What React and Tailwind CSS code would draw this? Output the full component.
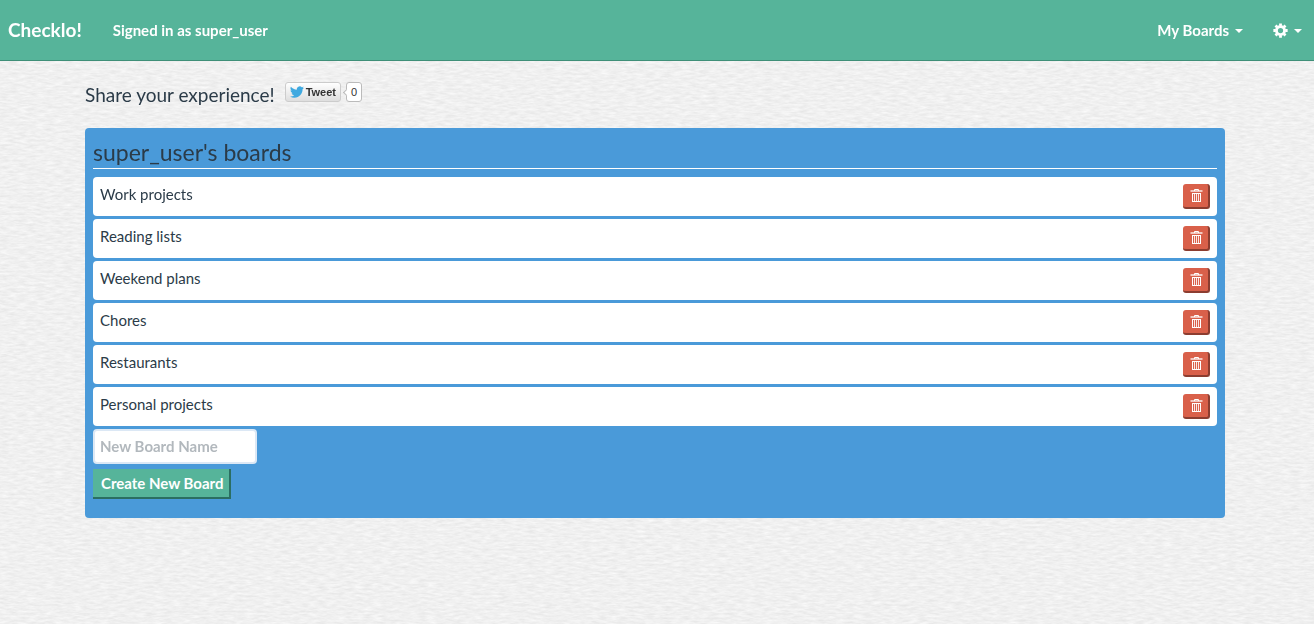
import React from "react";

const boards = [
  "Work projects",
  "Reading lists",
  "Weekend plans",
  "Chores",
  "Restaurants",
  "Personal projects",
];

function PaperTexture() {
  return (
    <svg className="fixed inset-0 -z-10 h-full w-full" aria-hidden="true">
      <filter id="paper" x="0" y="0" width="100%" height="100%" colorInterpolationFilters="sRGB">
        <feTurbulence type="fractalNoise" baseFrequency="0.11 0.45" numOctaves="3" seed="7" />
        <feColorMatrix values="0.1 0 0 0 0.891  0.1 0 0 0 0.891  0.1 0 0 0 0.891  0 0 0 0 1" />
      </filter>
      <rect width="100%" height="100%" fill="#f0f0f0" filter="url(#paper)" />
    </svg>
  );
}

function Caret() {
  return (
    <svg className="mt-0.5" width="8" height="4" viewBox="0 0 8 4" fill="currentColor" aria-hidden="true">
      <path d="M0 0h8L4 4z" />
    </svg>
  );
}

function Cog() {
  return (
    <svg width="15" height="15" viewBox="0 0 16 16" aria-hidden="true">
      <circle cx="8" cy="8" r="4.3" fill="none" stroke="currentColor" strokeWidth="3" />
      <path
        d="M8 .4V3M8 13v2.600M.4 8H3M13 8h2.600M2.700 2.700l1.800 1.800M11.500 11.500l1.800 1.800M2.700 13.300l1.800-1.800M11.500 4.500l1.800-1.800"
        stroke="currentColor"
        strokeWidth="3"
      />
    </svg>
  );
}

function Trash() {
  return (
    <svg width="13" height="15" viewBox="0 0 13 15" fill="none" stroke="currentColor" aria-hidden="true">
      <path d="M.5 3h12" strokeWidth="1.300" />
      <path d="M4.500 3V1.500h4V3" strokeWidth="1" />
      <path d="M2 5.500h9M2.500 5v9M10.500 5v9M2 13.500h9" strokeWidth="1" />
      <path d="M4.500 5v9M6.500 5v9M8.500 5v9" strokeWidth="1" strokeOpacity=".85" />
    </svg>
  );
}

function Bird() {
  return (
    <svg width="14" height="12" viewBox="0 2 24 20" fill="#3fa9e0" aria-hidden="true">
      <path d="M23.950 4.570a10 10 0 0 1-2.820.770 4.960 4.960 0 0 0 2.160-2.720c-.950.550-2 .950-3.130 1.180a4.920 4.920 0 0 0-8.380 4.480C7.690 8.100 4.070 6.130 1.640 3.160a4.920 4.920 0 0 0 1.520 6.570 4.900 4.900 0 0 1-2.230-.610v.060c0 2.390 1.700 4.380 3.950 4.830a5 5 0 0 1-2.210.080 4.940 4.940 0 0 0 4.600 3.420A9.870 9.870 0 0 1 0 19.540a14 14 0 0 0 7.550 2.210c9.050 0 14-7.500 14-13.980 0-.210 0-.420-.020-.630a9.940 9.940 0 0 0 2.460-2.550z" />
    </svg>
  );
}

export default function App() {
  return (
    <div className="font-['Lato',sans-serif] text-[15px] leading-5 text-[#2b3b48]">
      <PaperTexture />
      <header className="flex h-[61px] items-center justify-between border-b border-[#3f8f78] bg-[#56b49a] pr-3 pl-2 font-bold text-white">
        <div className="flex items-center gap-[31px]">
          <a href="#home" className="text-[19px]">Checklo!</a>
          <p>Signed in as super_user</p>
        </div>
        <nav className="flex items-center gap-[30px]">
          <button type="button" className="flex items-center gap-1.5">
            My Boards <Caret />
          </button>
          <button type="button" aria-label="Settings" className="flex items-center gap-1.5">
            <Cog /> <Caret />
          </button>
        </nav>
      </header>

      <main className="mx-auto max-w-[1144px] pr-1">
        <div className="flex h-[67px] items-center gap-2.5">
          <h1 className="text-[19px]">Share your experience!</h1>
          <div className="flex items-center gap-[5px] pb-1.5 font-['Liberation_Sans',sans-serif] text-[11px]">
            <a
              href="#tweet"
              className="flex h-5 items-center gap-0.5 rounded-[3px] border border-[#ccc] bg-linear-to-b from-white to-[#dedede] px-1 font-bold text-[#333]"
            >
              <Bird /> Tweet
            </a>
            <a href="#count" className="relative flex h-5 items-center rounded-[3px] border border-[#bbb] bg-white px-1 text-[#333]">
              <span className="absolute top-[7px] -left-[3px] size-[5px] rotate-45 border-b border-l border-[#bbb] bg-white" />
              0
            </a>
          </div>
        </div>

        <section className="rounded bg-[#4a9ad9] px-2 pt-2 pb-[19px]">
          <h2 className="mb-2 border-b border-white pt-0.5 pb-[2px] text-[23px] leading-7">
            super_user's boards
          </h2>
          <ul className="flex flex-col gap-[3px]">
            {boards.map((name) => (
              <li key={name} className="flex h-[39px] items-center justify-between rounded bg-white px-[7px]">
                <a href="#board" className="pb-1.5">{name}</a>
                <button
                  type="button"
                  aria-label={`Delete ${name}`}
                  className="flex h-[25px] w-[27px] items-center justify-center rounded-[3px] border-r-2 border-b-2 border-[#8c3d30] bg-[#d9604a] pl-0.5 text-white"
                >
                  <Trash />
                </button>
              </li>
            ))}
          </ul>
          <form className="mt-[3px] flex flex-col items-start gap-[5px]">
            <input
              type="text"
              aria-label="New Board Name"
              placeholder="New Board Name"
              className="h-[35px] w-[164px] rounded border-2 border-[#dce8f5] bg-white px-[5px] pb-0.5 font-bold placeholder:text-[#b2b8bd]"
            />
            <button
              type="button"
              className="h-[30px] border-r-2 border-b-2 border-[#2b6e62] bg-[#56b49a] pr-1.5 pl-2 font-bold text-white"
            >
              Create New Board
            </button>
          </form>
        </section>
      </main>
    </div>
  );
}
